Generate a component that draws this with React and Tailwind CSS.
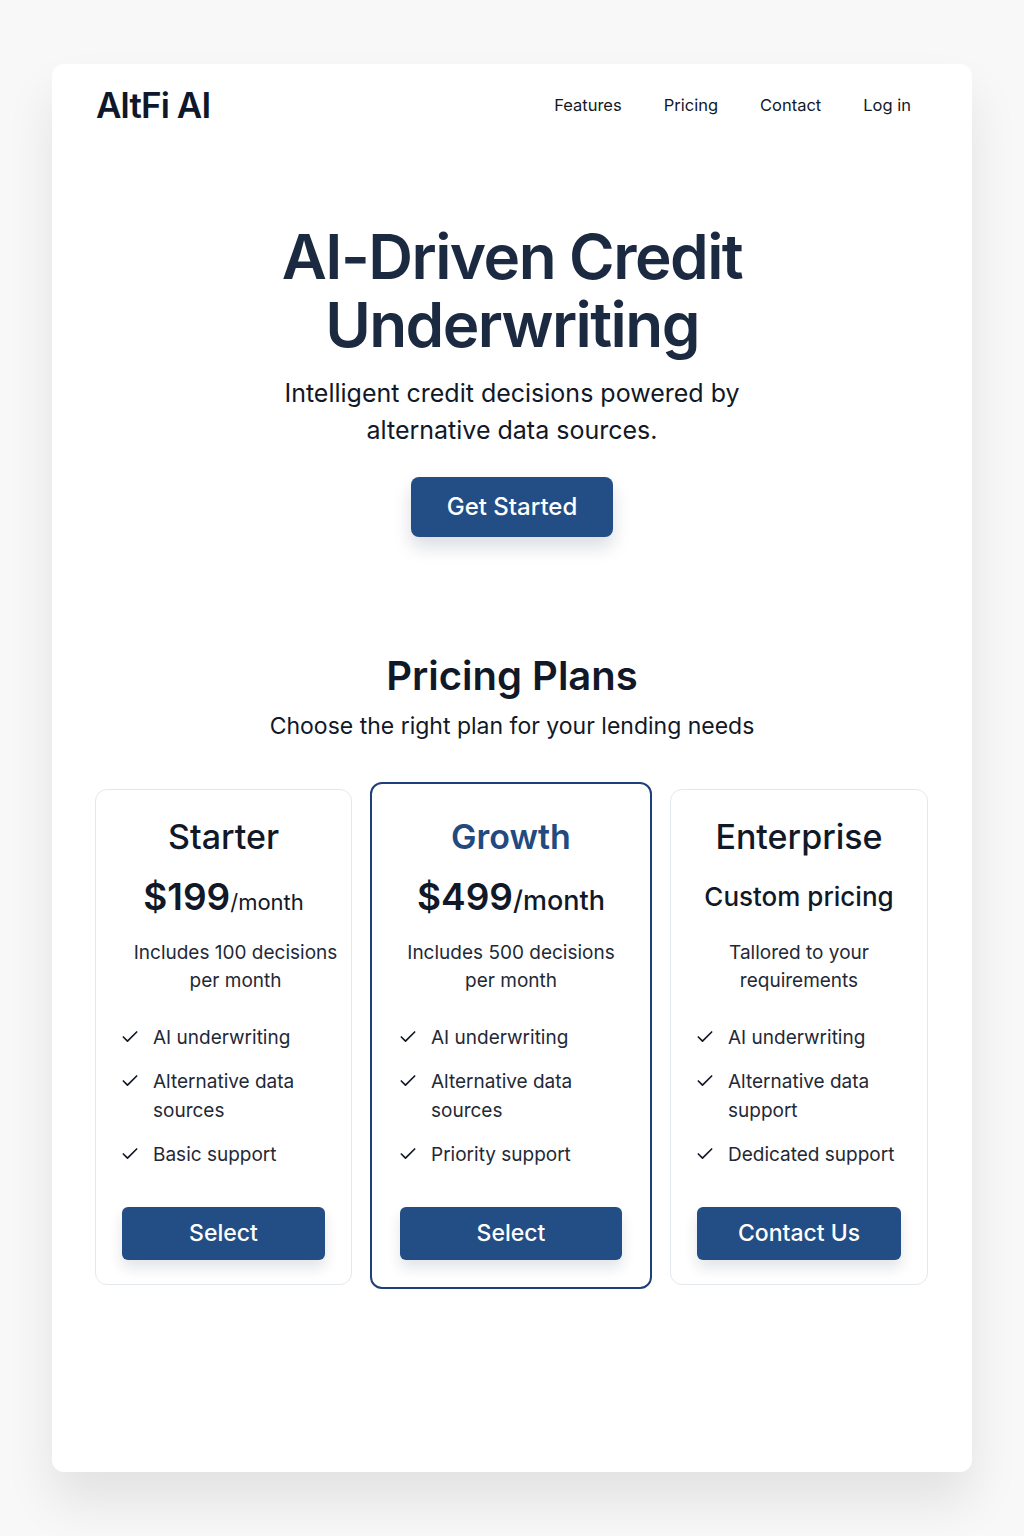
import { Check } from 'lucide-react'

const plans = [
  {
    name: 'Starter',
    price: '$199',
    note: ['Includes 100 decisions', 'per month'],
    features: [['AI underwriting'], ['Alternative data', 'sources'], ['Basic support']],
    cta: 'Select',
  },
  {
    name: 'Growth',
    price: '$499',
    note: ['Includes 500 decisions', 'per month'],
    features: [['AI underwriting'], ['Alternative data', 'sources'], ['Priority support']],
    cta: 'Select',
    featured: true,
  },
  {
    name: 'Enterprise',
    custom: 'Custom pricing',
    note: ['Tallored to your', 'requirements'],
    features: [['AI underwriting'], ['Alternative data', 'support'], ['Dedicated support']],
    cta: 'Contact Us',
  },
]

function PlanCard({ plan }) {
  return (
    <div
      className={
        plan.featured
          ? 'flex h-[507px] flex-col rounded-xl border-2 border-[#1f3f7a] bg-white px-[28px] pt-[31px] pb-[27px]'
          : 'mt-[7px] flex h-[496px] flex-col rounded-xl border border-[#e3e8ef] bg-white px-[26px] pt-[25px] pb-[24px]'
      }
    >
      <h3
        className={
          'text-center text-[34px] leading-[44px] ' +
          (plan.featured ? 'font-semibold text-[#234a80]' : 'font-medium text-[#111827]')
        }
      >
        {plan.name}
      </h3>
      {plan.custom ? (
        <div className="mt-[15px] h-[46px] text-center text-[26px] leading-[46px] font-medium text-[#111827]">
          {plan.custom}
        </div>
      ) : (
        <div className="mt-[15px] flex h-[46px] items-baseline justify-center leading-[46px] text-[#111827]">
          <span className="text-[37px] font-semibold">{plan.price}</span>
          <span className={plan.featured ? 'text-[27px] font-medium' : 'text-[22px]'}>/month</span>
        </div>
      )}
      <p
        className={
          '-mx-4 mt-[19px] whitespace-nowrap text-center text-[19px] leading-[28px] text-[#1f2937] ' +
          (plan.name === 'Starter' ? 'pl-[24px]' : '')
        }
      >
        {plan.note[0]}
        <br />
        {plan.note[1]}
      </p>
      <ul className="mt-[28px] flex flex-col gap-[15px]">
        {plan.features.map((f, i) => (
          <li key={i} className="flex gap-[13px] text-[19px] leading-[29px] text-[#1f2937]">
            <Check size={20} strokeWidth={2} className="mt-[4px] -ml-[2px] shrink-0 text-[#111827]" />
            <span>
              {f[0]}
              {f[1] && (
                <>
                  <br />
                  {f[1]}
                </>
              )}
            </span>
          </li>
        ))}
      </ul>
      <button className="mt-auto h-[53px] rounded-md bg-[#234e85] text-[23px] font-medium text-white shadow-[0_8px_14px_rgba(15,30,60,0.12)]">
        {plan.cta}
      </button>
    </div>
  )
}

export default function App() {
  return (
    <div className="min-h-[1536px] bg-[#f8f8f8] pt-16" style={{ fontFamily: 'Inter, "Noto Sans", sans-serif' }}>
      <div className="mx-auto flex h-[1408px] w-[920px] flex-col rounded-xl bg-white shadow-[0_30px_50px_rgba(0,0,0,0.09)]">
        <header className="flex items-center justify-between pt-[15px] pl-[44px] pr-[61px]">
          <div className="text-[35px] font-semibold tracking-tight text-[#0f172a]">AltFi AI</div>
          <nav className="flex gap-[42px] text-[16.5px] text-[#111827]">
            <a>Features</a>
            <a>Pricing</a>
            <a>Contact</a>
            <a>Log in</a>
          </nav>
        </header>

        <section className="mt-[91px] flex flex-col items-center text-center">
          <h1 className="text-[62px] leading-[68px] font-semibold tracking-tight text-[#1b2a41]">
            AI-Driven Credit
            <br />
            Underwriting
          </h1>
          <p className="mt-[16px] text-[25px] leading-[37px] text-[#111827]">
            Intelligent credit decisions powered by
            <br />
            alternative data sources.
          </p>
          <button className="mt-[28px] h-[60px] w-[202px] rounded-lg bg-[#234e85] text-[24px] font-medium text-white shadow-[0_10px_18px_rgba(15,30,60,0.15)]">
            Get Started
          </button>
        </section>

        <section className="mt-[115px] flex flex-col items-center">
          <h2 className="text-[40px] leading-[48px] font-semibold text-[#111827]">Pricing Plans</h2>
          <p className="mt-[9px] text-[23px] text-[#111827]">Choose the right plan for your lending needs</p>
        </section>

        <div className="mt-[39px] grid grid-cols-[257px_282px_258px] items-start gap-[18px] px-[43px]">
          {plans.map((p) => (
            <PlanCard key={p.name} plan={p} />
          ))}
        </div>
      </div>
    </div>
  )
}
